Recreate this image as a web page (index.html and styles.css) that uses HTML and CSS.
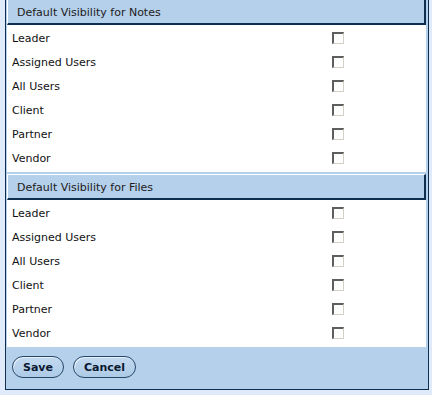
FILE: index.html
```html
<!DOCTYPE html>
<html lang="en">
<head>
    <meta charset="UTF-8">
    <title>Default Visibility</title>
    <link rel="stylesheet" href="styles.css">
</head>
<body>
    <div class="panel">
        <div class="section-head first">Default Visibility for Notes</div>
        <div class="rows">
            <div class="row"><span>Leader</span><span class="check"></span></div>
            <div class="row"><span>Assigned Users</span><span class="check"></span></div>
            <div class="row"><span>All Users</span><span class="check"></span></div>
            <div class="row"><span>Client</span><span class="check"></span></div>
            <div class="row"><span>Partner</span><span class="check"></span></div>
            <div class="row"><span>Vendor</span><span class="check"></span></div>
        </div>

        <div class="section-head">Default Visibility for Files</div>
        <div class="rows">
            <div class="row"><span>Leader</span><span class="check"></span></div>
            <div class="row"><span>Assigned Users</span><span class="check"></span></div>
            <div class="row"><span>All Users</span><span class="check"></span></div>
            <div class="row"><span>Client</span><span class="check"></span></div>
            <div class="row"><span>Partner</span><span class="check"></span></div>
            <div class="row"><span>Vendor</span><span class="check"></span></div>
        </div>

        <div class="actions">
            <button class="btn">Save</button>
            <button class="btn">Cancel</button>
        </div>
    </div>
</body>
</html>
```

FILE: styles.css
```css
body {
    margin: 0;
    background: #dfeafa;
    font-family: "DejaVu Sans", Verdana, sans-serif;
    font-size: 11px;
    color: #111;
}
.panel {
    width: 419px;
    margin: 0 0 0 5px;
    padding: 0 2px 0 1px;
    background: #b4d0ea;
    border: 1px solid #0d2e4f;
    border-top: none;
}
.section-head {
    height: 20px;
    line-height: 20px;
    padding: 3px 0 0 9px;
    margin-top: 2px;
    background: #b4d0ea;
    color: #231a1a;
    border-top: 1px solid #fff;
    border-left: 1px solid #fff;
    border-right: 2px solid #0d2e4f;
    border-bottom: 2px solid #0d2e4f;
}
.section-head.first {
    margin-top: 0;
    border-top: none;
}
.rows {
    background: #fff;
    padding: 1px 0 2px;
}
.row {
    display: grid;
    grid-template-columns: 320px 13px;
    align-items: center;
    height: 24px;
    padding-left: 5px;
}
.check {
    width: 9px;
    height: 9px;
    background: #fff;
    border-top: 2px solid #5e5e5e;
    border-left: 2px solid #5e5e5e;
    border-right: 1px solid #d4d0c8;
    border-bottom: 1px solid #d4d0c8;
}
.actions {
    display: flex;
    gap: 9px;
    height: 33px;
    align-items: flex-start;
    padding: 9px 0 0 5px;
}
.btn {
    height: 22px;
    padding: 0 10px;
    font-family: "DejaVu Sans", Verdana, sans-serif;
    font-size: 11px;
    font-weight: bold;
    color: #0b1830;
    background: linear-gradient(#c3daf0, #adcae6);
    border: 1px solid #27476a;
    border-radius: 11px;
    box-shadow: inset 1px 1px 0 #e6f0fa;
}
```
